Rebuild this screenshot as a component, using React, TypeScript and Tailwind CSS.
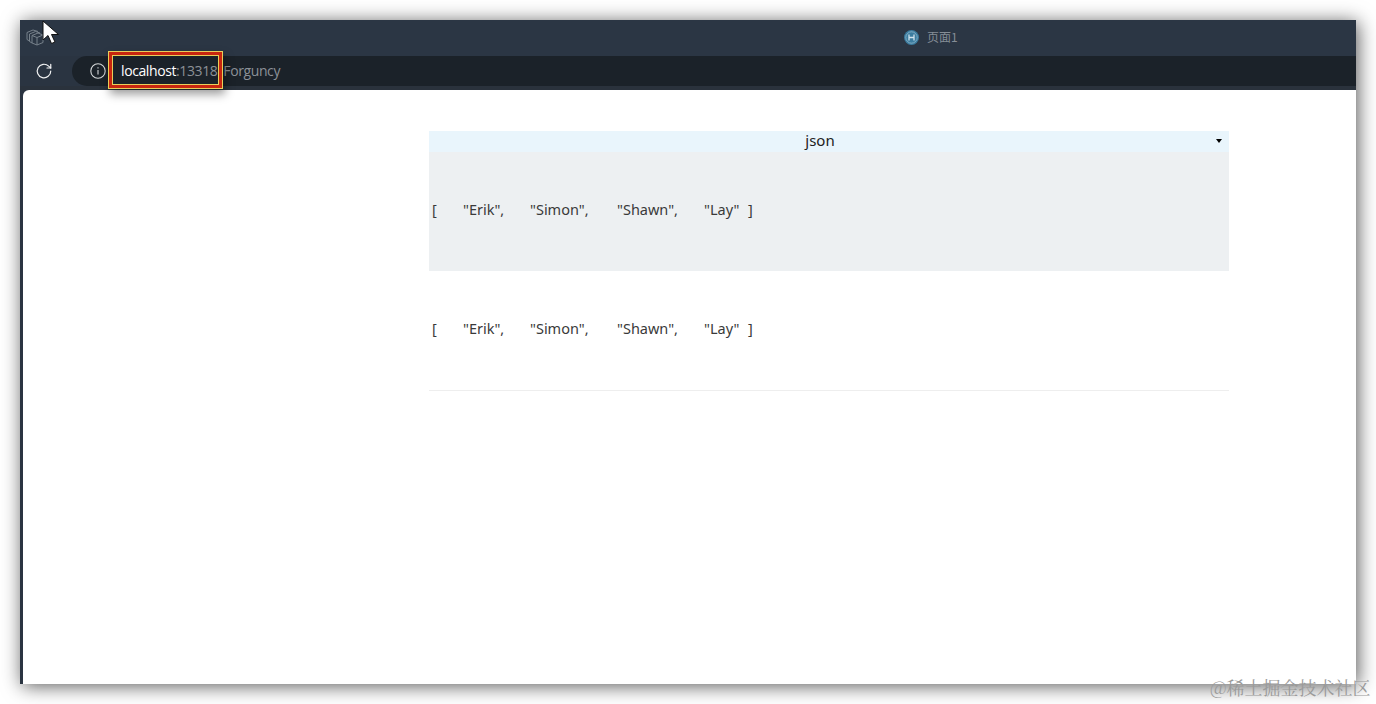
const JsonLine = () => (
  <div className="flex items-center h-full pb-[3px] text-[14.5px] text-[#3a3a3a] [font-family:'Noto_Sans','Liberation_Sans',sans-serif]">
    <span className="w-[34px] pl-[3px]">[</span>
    <span className="w-[67px]">"Erik",</span>
    <span className="w-[87px]">"Simon",</span>
    <span className="w-[87px]">"Shawn",</span>
    <span className="w-[44px]">"Lay"</span>
    <span>]</span>
  </div>
);

export default function App() {
  return (
    <div className="relative w-[1376px] h-[704px] overflow-hidden bg-white p-[20px]">
      <div className="flex flex-col w-[1336px] h-[664px] bg-[#2a3441] shadow-[2px_2px_18px_rgba(0,0,0,0.65)]">
        <div className="flex items-center h-[36px] shrink-0 pb-[2px] bg-[#2b3644]">
          <svg width="18" height="18" viewBox="0 0 18 18" fill="none" stroke="#77818b" strokeWidth="1" strokeLinejoin="round" className="ml-[6px]">
            <path d="M1 4.500 7 2l5 1.500" />
            <path d="M1 4.500v7l2.500 1.500" />
            <path d="M3.500 6 9.500 3.500 14 5" />
            <path d="M3.500 6v7.500L6 15" />
            <path d="M6 7.500 12 5l5 2v7.500L11 17l-5-2z" />
            <path d="M11 9.500V17M6 7.500l5 2 6-2.500" />
          </svg>
          <div className="flex items-center ml-[860px] gap-[8px]">
            <svg width="15" height="15" viewBox="0 0 15 15" fill="none">
              <circle cx="7.500" cy="7.500" r="7.500" fill="#3b7c9f" />
              <circle cx="7.500" cy="7.500" r="5.700" stroke="#a9c8d8" strokeWidth="0.600" />
              <path d="M5 4.500v6M10 4.500v6M5 7.500h5" stroke="#cfe2ec" strokeWidth="1.300" />
            </svg>
            <span className="text-[12px] text-[#858d96] [font-family:'Noto_Sans_CJK_SC','Noto_Sans',sans-serif]">页面1</span>
          </div>
        </div>
        <div className="flex items-center h-[30px] shrink-0 bg-[#2a3441]">
          <svg width="18" height="18" viewBox="0 0 24 24" fill="none" stroke="#f2f3f4" strokeWidth="1.600" strokeLinecap="round" strokeLinejoin="round" className="ml-[15px]">
            <path d="M21 12a9 9 0 1 1-2.800-6.500L21 8" />
            <path d="M21 3v5h-5" />
          </svg>
          <div className="flex items-center flex-1 h-[30px] ml-[19px] pl-[18px] rounded-l-[15px] bg-[#1b2229] text-[14px] leading-[20px] tracking-[-0.4px] [font-family:'Open_Sans','Noto_Sans',sans-serif]">
            <svg width="16" height="16" viewBox="0 0 16 16" fill="none" stroke="#d5d8da" strokeWidth="1.100">
              <circle cx="8" cy="8" r="7.200" />
              <path d="M8 7v4.500" />
              <path d="M8 4.200v1.300" />
            </svg>
            <span className="ml-[15px] pb-[1px] text-white">localhost</span>
            <span className="pb-[1px] text-[#8c9197]">:13318</span>
            <span className="ml-[6px] pb-[1px] text-[#8c9197]">Forguncy</span>
          </div>
        </div>
        <div className="h-[4px] shrink-0 bg-[#2a323c]" />
        <div className="flex-1 ml-[3px] bg-white rounded-tl-[6px] pt-[41px] pl-[406px]">
          <div className="w-[800px]">
            <div className="relative flex items-center justify-center h-[21px] pb-[2px] bg-[#e9f5fc] pr-[18px]">
              <span className="text-[15px] text-[#222222] [font-family:'Noto_Sans','Liberation_Sans',sans-serif]">json</span>
              <span className="absolute right-[7px] top-[8px] w-0 h-0 border-x-[3px] border-x-transparent border-t-[4px] border-t-black" />
            </div>
            <div className="h-[119px] bg-[#edf0f2]">
              <JsonLine />
            </div>
            <div className="h-[120px] border-b border-[#eeeeee]">
              <JsonLine />
            </div>
          </div>
        </div>
      </div>

      <div className="absolute left-[108px] top-[51px] w-[115px] h-[38px] border border-[#e8cf5a] shadow-[2px_5px_9px_rgba(0,0,0,0.4)]">
        <div className="h-full border-[3px] border-[#c8260f]">
          <div className="h-full border border-[#e8cf5a]" />
        </div>
      </div>

      <svg width="18" height="26" viewBox="0 0 18 26" className="absolute left-[42px] top-[20px]">
        <path d="M1 1v19l5-4.500 3.500 8 3.500-1.500-3.500-7.500h7z" fill="#ffffff" stroke="#111111" strokeWidth="1" />
      </svg>

      <span className="absolute left-[1210px] top-[675px] text-[18px] leading-[24px] text-[#9a9a9a] [font-family:'Noto_Serif_CJK_SC','Noto_Sans_CJK_SC',serif] whitespace-nowrap">@稀土掘金技术社区</span>
    </div>
  );
}
